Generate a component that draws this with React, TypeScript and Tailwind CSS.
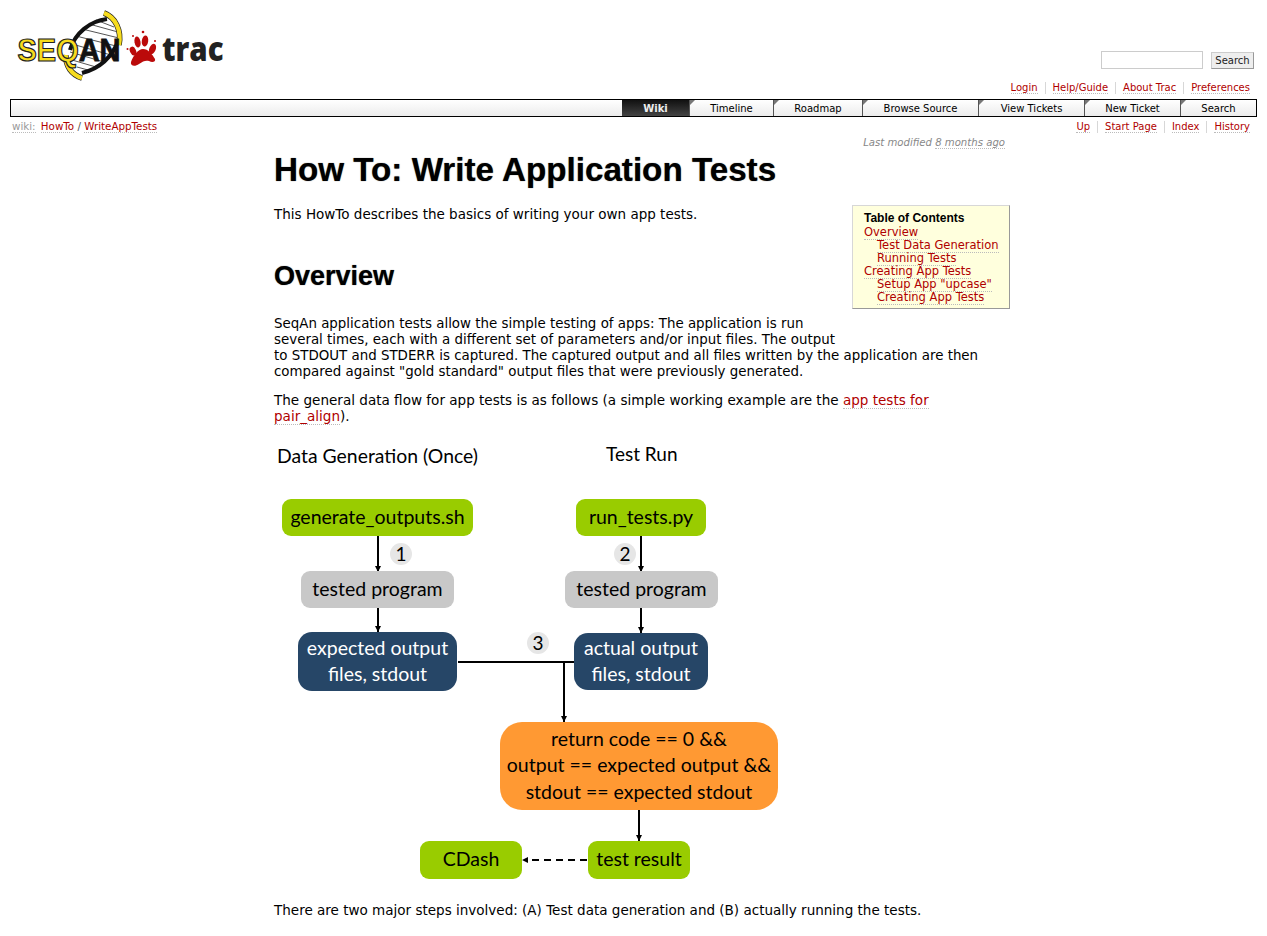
const verdana = "font-['DejaVu_Sans',Verdana,sans-serif]";

function A({ children, className = "" }: { children: React.ReactNode; className?: string }) {
  return (
    <a href="#" className={`border-b border-dotted border-[#bbb] text-[#b00000] ${className}`}>
      {children}
    </a>
  );
}

function LinkBar({ items }: { items: string[] }) {
  return (
    <ul className="flex text-[10px] leading-[12px]">
      {items.map((item, i) => (
        <li key={item} className={i === 0 ? "pr-[7px]" : "border-l border-[#d7d7d7] px-[7px] last:pr-0"}>
          <A>{item}</A>
        </li>
      ))}
    </ul>
  );
}

function Logo() {
  return (
    <svg width="240" height="90" viewBox="0 0 240 90" className="block">
      {/* helix body */}
      <path d="M70 52 C76 34 90 21 108 19 C116 30 119 38 118 40 C110 58 98 68 82 73 C74 68 70 60 70 52Z" fill="#fff" />
      <path
        d="M76 36L116 46M82 29L119 38M89 24L118 32M96 20L114 27M72 44L111 55M70 52L104 62M72 60L96 67M77 67L88 70"
        stroke="#555"
        strokeWidth="1"
      />
      <path d="M70 50 C75 33 90 21 107 19" fill="none" stroke="#111" strokeWidth="4" />
      <path d="M82 73 C98 69 112 58 119 39" fill="none" stroke="#111" strokeWidth="4" />
      {/* yellow backbone arcs */}
      <path d="M104 13 C115 17 122 30 119 45" fill="none" stroke="#222" strokeWidth="5.6" />
      <path d="M104 13 C115 17 122 30 119 45" fill="none" stroke="#f7dc1e" strokeWidth="4.2" />
      <path d="M66 55 C65 66 72 75 82 78" fill="none" stroke="#222" strokeWidth="5.6" />
      <path d="M66 55 C65 66 72 75 82 78" fill="none" stroke="#f7dc1e" strokeWidth="4.2" />
      <text x="17.5" y="60.5" fontFamily="Liberation Sans" fontWeight="700" fontSize="31" textLength="103" lengthAdjust="spacingAndGlyphs">
        <tspan fill="#f7dc1e" stroke="#222" strokeWidth="1.2">SEQ</tspan>
        <tspan fill="#111" stroke="#111" strokeWidth="0.8">AN</tspan>
      </text>
      {/* paw */}
      <g fill="#bb0a0a">
        <path d="M143 49 C148 49 152 54 155 59 C156 62 152 63 149 61 C146 60 143 61 139 64 C135 67 130 66 131 62 C133 56 138 49 143 49Z" />
        <ellipse cx="133" cy="51" rx="3" ry="4.5" transform="rotate(-25 133 51)" />
        <ellipse cx="137.5" cy="42" rx="3" ry="5.5" transform="rotate(-10 137.5 42)" />
        <ellipse cx="145" cy="41" rx="3.2" ry="5.5" transform="rotate(8 145 41)" />
        <ellipse cx="152.5" cy="49" rx="3.2" ry="5.5" transform="rotate(22 152.5 49)" />
        <circle cx="143" cy="32" r="1.3" />
        <circle cx="133" cy="36" r="1" />
        <circle cx="155" cy="41" r="1" />
        <circle cx="127.5" cy="49" r="1" />
      </g>
      <text x="162" y="60.5" fontFamily="Open Sans" fontWeight="800" fontSize="34" fill="#222" textLength="61.5" lengthAdjust="spacingAndGlyphs">trac</text>
    </svg>
  );
}

const navItems = [
  { label: "Wiki", w: "w-[67px]", active: true },
  { label: "Timeline", w: "w-[84px]" },
  { label: "Roadmap", w: "w-[89px]" },
  { label: "Browse Source", w: "w-[116px]" },
  { label: "View Tickets", w: "w-[106px]" },
  { label: "New Ticket", w: "w-[96px]" },
  { label: "Search", w: "w-[76px]" },
];

function MainNav() {
  return (
    <nav className="mx-[10px] flex h-[18px] justify-end border border-black bg-gradient-to-b from-white to-[#ececec] text-[10px] leading-[17px] text-black">
      {navItems.map((item) =>
        item.active ? (
          <div key={item.label} className={`${item.w} bg-gradient-to-b from-[#111] to-[#444] text-center font-bold text-[#eee]`}>
            {item.label}
          </div>
        ) : (
          <div key={item.label} className={`${item.w} relative border-l border-[#555] text-center`}>
            <span className="absolute left-0 top-0 h-0 w-0 border-r-[5px] border-t-[5px] border-r-transparent border-t-[#777]" />
            {item.label}
          </div>
        )
      )}
    </nav>
  );
}

function Toc() {
  const rows = [
    ["Overview", 0],
    ["Test Data Generation", 1],
    ["Running Tests", 1],
    ["Creating App Tests", 0],
    ['Setup App "upcase"', 1],
    ["Creating App Tests", 1],
  ] as const;
  return (
    <div className="float-right mt-[-1px] h-[104px] w-[158px] border border-[#d7d7d7] border-b-[#999] border-r-[#999] bg-[#ffffdd] pl-[11px] pt-[5px] text-[11.5px] leading-[13px]">
      <h4 className="font-['Liberation_Sans',Arial,sans-serif] text-[12px] font-bold leading-[15px] text-black">Table of Contents</h4>
      {rows.map(([label, indent], i) => (
        <div key={i} className={indent ? "pl-[13px]" : ""}>
          <A>{label}</A>
        </div>
      ))}
    </div>
  );
}

function Box({ x, y, w, h, bg, radius, light, children }: {
  x: number; y: number; w: number; h: number; bg: string; radius: string; light?: boolean; children: React.ReactNode;
}) {
  return (
    <div
      className={`absolute flex flex-col items-center justify-center whitespace-nowrap pb-[1px] text-center text-[19.5px] leading-[26.5px] ${bg} ${radius} ${light ? "text-white" : "text-black"}`}
      style={{ left: x - 274, top: y - 436, width: w, height: h }}
    >
      {children}
    </div>
  );
}

function Badge({ x, y, n }: { x: number; y: number; n: number }) {
  return (
    <div
      className="absolute flex h-[22px] w-[22px] items-center justify-center rounded-full bg-[#e6e6e6] text-[19px] text-black"
      style={{ left: x - 285, top: y - 447 }}
    >
      {n}
    </div>
  );
}

function Diagram() {
  return (
    <div className="relative h-[462px] font-['Lato','Open_Sans',sans-serif]">
      <div className="absolute left-[3px] top-[7px] whitespace-nowrap text-[19.4px] leading-[26px] text-black">Data Generation (Once)</div>
      <div className="absolute left-[332px] top-[5px] whitespace-nowrap text-[19px] leading-[26px] text-black">Test Run</div>

      <svg className="absolute left-0 top-0" width="560" height="462" viewBox="274 436 560 462">
        <g stroke="#000" strokeWidth="2" fill="none">
          <path d="M378 536V571M378 608V632M641 536V571M641 608V633M458 662H578M564 662V722M639 810V841" />
          <path d="M587 860H528" strokeDasharray="7 5" />
        </g>
        <g fill="#000">
          <path d="M375 566h6l-3 6zM375 626h6l-3 6zM638 566h6l-3 6zM638 627h6l-3 6zM561 716h6l-3 6zM636 835h6l-3 6zM528 857v6l-6-3z" />
        </g>
      </svg>

      <Box x={282} y={499} w={191} h={37} bg="bg-[#99cc00]" radius="rounded-[9px]">generate_outputs.sh</Box>
      <Box x={576} y={499} w={130} h={37} bg="bg-[#99cc00]" radius="rounded-[9px]">run_tests.py</Box>
      <Box x={301} y={571} w={153} h={37} bg="bg-[#c8c8c8]" radius="rounded-[9px]">tested program</Box>
      <Box x={565} y={571} w={153} h={37} bg="bg-[#c8c8c8]" radius="rounded-[9px]">tested program</Box>
      <Box x={298} y={632} w={159} h={59} bg="bg-[#264667]" radius="rounded-[14px]" light>
        <span>expected output</span>
        <span>files, stdout</span>
      </Box>
      <Box x={574} y={633} w={134} h={57} bg="bg-[#264667]" radius="rounded-[14px]" light>
        <span>actual output</span>
        <span>files, stdout</span>
      </Box>
      <Box x={500} y={722} w={278} h={88} bg="bg-[#ff9933]" radius="rounded-[22px]">
        <span>return code == 0 &amp;&amp;</span>
        <span>output == expected output &amp;&amp;</span>
        <span>stdout == expected stdout</span>
      </Box>
      <Box x={420} y={841} w={102} h={38} bg="bg-[#99cc00]" radius="rounded-[9px]">CDash</Box>
      <Box x={588} y={841} w={102} h={38} bg="bg-[#99cc00]" radius="rounded-[9px]">test result</Box>

      <Badge x={401} y={554} n={1} />
      <Badge x={625} y={554} n={2} />
      <Badge x={538} y={643} n={3} />
    </div>
  );
}

export default function App() {
  return (
    <div className={`${verdana} min-h-[936px] bg-white text-[13.4px] text-black`}>
      <header className="flex h-[99px] justify-between">
        <Logo />
        <div className="flex flex-col items-end pr-[17px]">
          <div className="-mr-[4px] mt-[51px] flex items-start gap-[8px]">
            <input className="h-[18px] w-[102px] border border-[#ccc] bg-white" />
            <button className="mt-[1px] h-[17px] w-[43px] border border-[#ccc] border-b-[#999] border-r-[#999] bg-[#eee] text-[10px] leading-[14px] text-[#222]">
              Search
            </button>
          </div>
          <div className="mt-[13px]">
            <LinkBar items={["Login", "Help/Guide", "About Trac", "Preferences"]} />
          </div>
        </div>
      </header>

      <MainNav />

      <div className="flex h-[18px] items-center justify-between pl-[12px] pr-[17px] text-[10.3px]">
        <div className="leading-[12px]">
          <span className="border-b border-dotted border-[#bbb] text-[#999]">wiki:</span>{" "}
          <A className="ml-[2px]">HowTo</A> <span className="text-[#555]">/</span> <A>WriteAppTests</A>
        </div>
        <div className="mt-[2px]">
          <LinkBar items={["Up", "Start Page", "Index", "History"]} />
        </div>
      </div>

      <main className="ml-[274px] w-[736px]">
        <p className="mt-[2px] h-[15px] pr-[5px] text-right text-[10.15px] italic leading-[12px] text-[#888]">
          Last modified <span className="border-b border-dotted border-[#bbb]">8 months ago</span>
        </p>
        <h1 className="font-['Liberation_Sans',Arial,sans-serif] text-[33.2px] font-bold leading-[36px] [text-shadow:0_0_1px_#555]">
          How To: Write Application Tests
        </h1>
        <div className="mt-[18px]">
          <Toc />
          <p className="text-[13.5px] leading-[16px]">This HowTo describes the basics of writing your own app tests.</p>
          <h2 className="mt-[39px] font-['Liberation_Sans',Arial,sans-serif] text-[27px] font-bold leading-[30px] [text-shadow:0_0_1px_#555]">
            Overview
          </h2>
          <p className="mt-[25px] leading-[16px]">
            SeqAn application tests allow the simple testing of apps: The application is run<br />
            several times, each with a different set of parameters and/or input files. The output<br />
            to STDOUT and STDERR is captured. The captured output and all files written by the application are then<br />
            compared against "gold standard" output files that were previously generated.
          </p>
          <p className="mt-[12px] text-[13.55px] leading-[16px]">
            The general data flow for app tests is as follows (a simple working example are the{" "}
            <A>app tests for</A>
            <br />
            <A>pair_align</A>).
          </p>
          <div className="mt-[12px]">
            <Diagram />
          </div>
          <p className="mt-[4px] text-[13.52px] leading-[16px]">
            There are two major steps involved: (A) Test data generation and (B) actually running the tests.
          </p>
        </div>
      </main>
    </div>
  );
}
